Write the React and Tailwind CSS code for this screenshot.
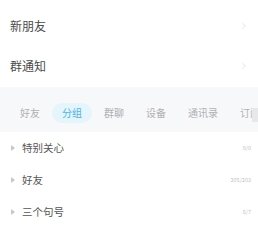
import { ChevronRight } from 'lucide-react';

const groups = [
  { name: '特别关心', count: '0/0' },
  { name: '好友', count: '205/203' },
  { name: '三个句号', count: '6/7' },
];

const tabs = ['好友', '分组', '群聊', '设备', '通讯录', '订阅号'];

export default function App() {
  return (
    <div
      className="w-[258px] h-[225px] overflow-hidden bg-white"
      style={{ fontFamily: '"Noto Sans CJK SC", "Noto Sans", sans-serif' }}
    >
      {/* Top entries */}
      <div className="pt-[6px] pb-[1px]">
        {['新朋友', '群通知'].map((label) => (
          <div key={label} className="h-[40px] flex items-center justify-between pl-[10px] pr-[9px]">
            <span className="text-[12px] text-[#4a4a4a]">{label}</span>
            <ChevronRight size={10} strokeWidth={1.25} className="text-[#c8c8c8]" />
          </div>
        ))}
      </div>

      {/* Tab bar */}
      <div className="h-[45px] bg-[#f7f8fa] flex items-center pt-[6px] pl-[10px] overflow-hidden">
        <div className="flex items-center gap-[2px] whitespace-nowrap">
          {tabs.map((t) => (
            <div
              key={t}
              className={
                t === '分组'
                  ? 'h-[20px] px-[10px] flex items-center rounded-full bg-[#e4f5fc] text-[10px] text-[#4db2e4]'
                  : 'h-[20px] px-[10px] flex items-center text-[10px] text-[#b0b0b4]'
              }
            >
              {t}
            </div>
          ))}
        </div>
      </div>

      {/* Group list */}
      <div className="relative">
        <div className="absolute right-0 -top-[24px] w-[6px] h-[14px] bg-[#e8e8ea]" />
        {groups.map((g) => (
          <div key={g.name} className="h-[32px] flex items-center pl-[11px] pr-[7px]">
            <span className="w-0 h-0 border-y-[3px] border-y-transparent border-l-[4px] border-l-[#c8c8cc] mr-[7px]" />
            <span className="text-[10.5px] text-[#555] flex-1">{g.name}</span>
            <span className="text-[5.5px] text-[#c0c0c4]">{g.count}</span>
          </div>
        ))}
      </div>
    </div>
  );
}
